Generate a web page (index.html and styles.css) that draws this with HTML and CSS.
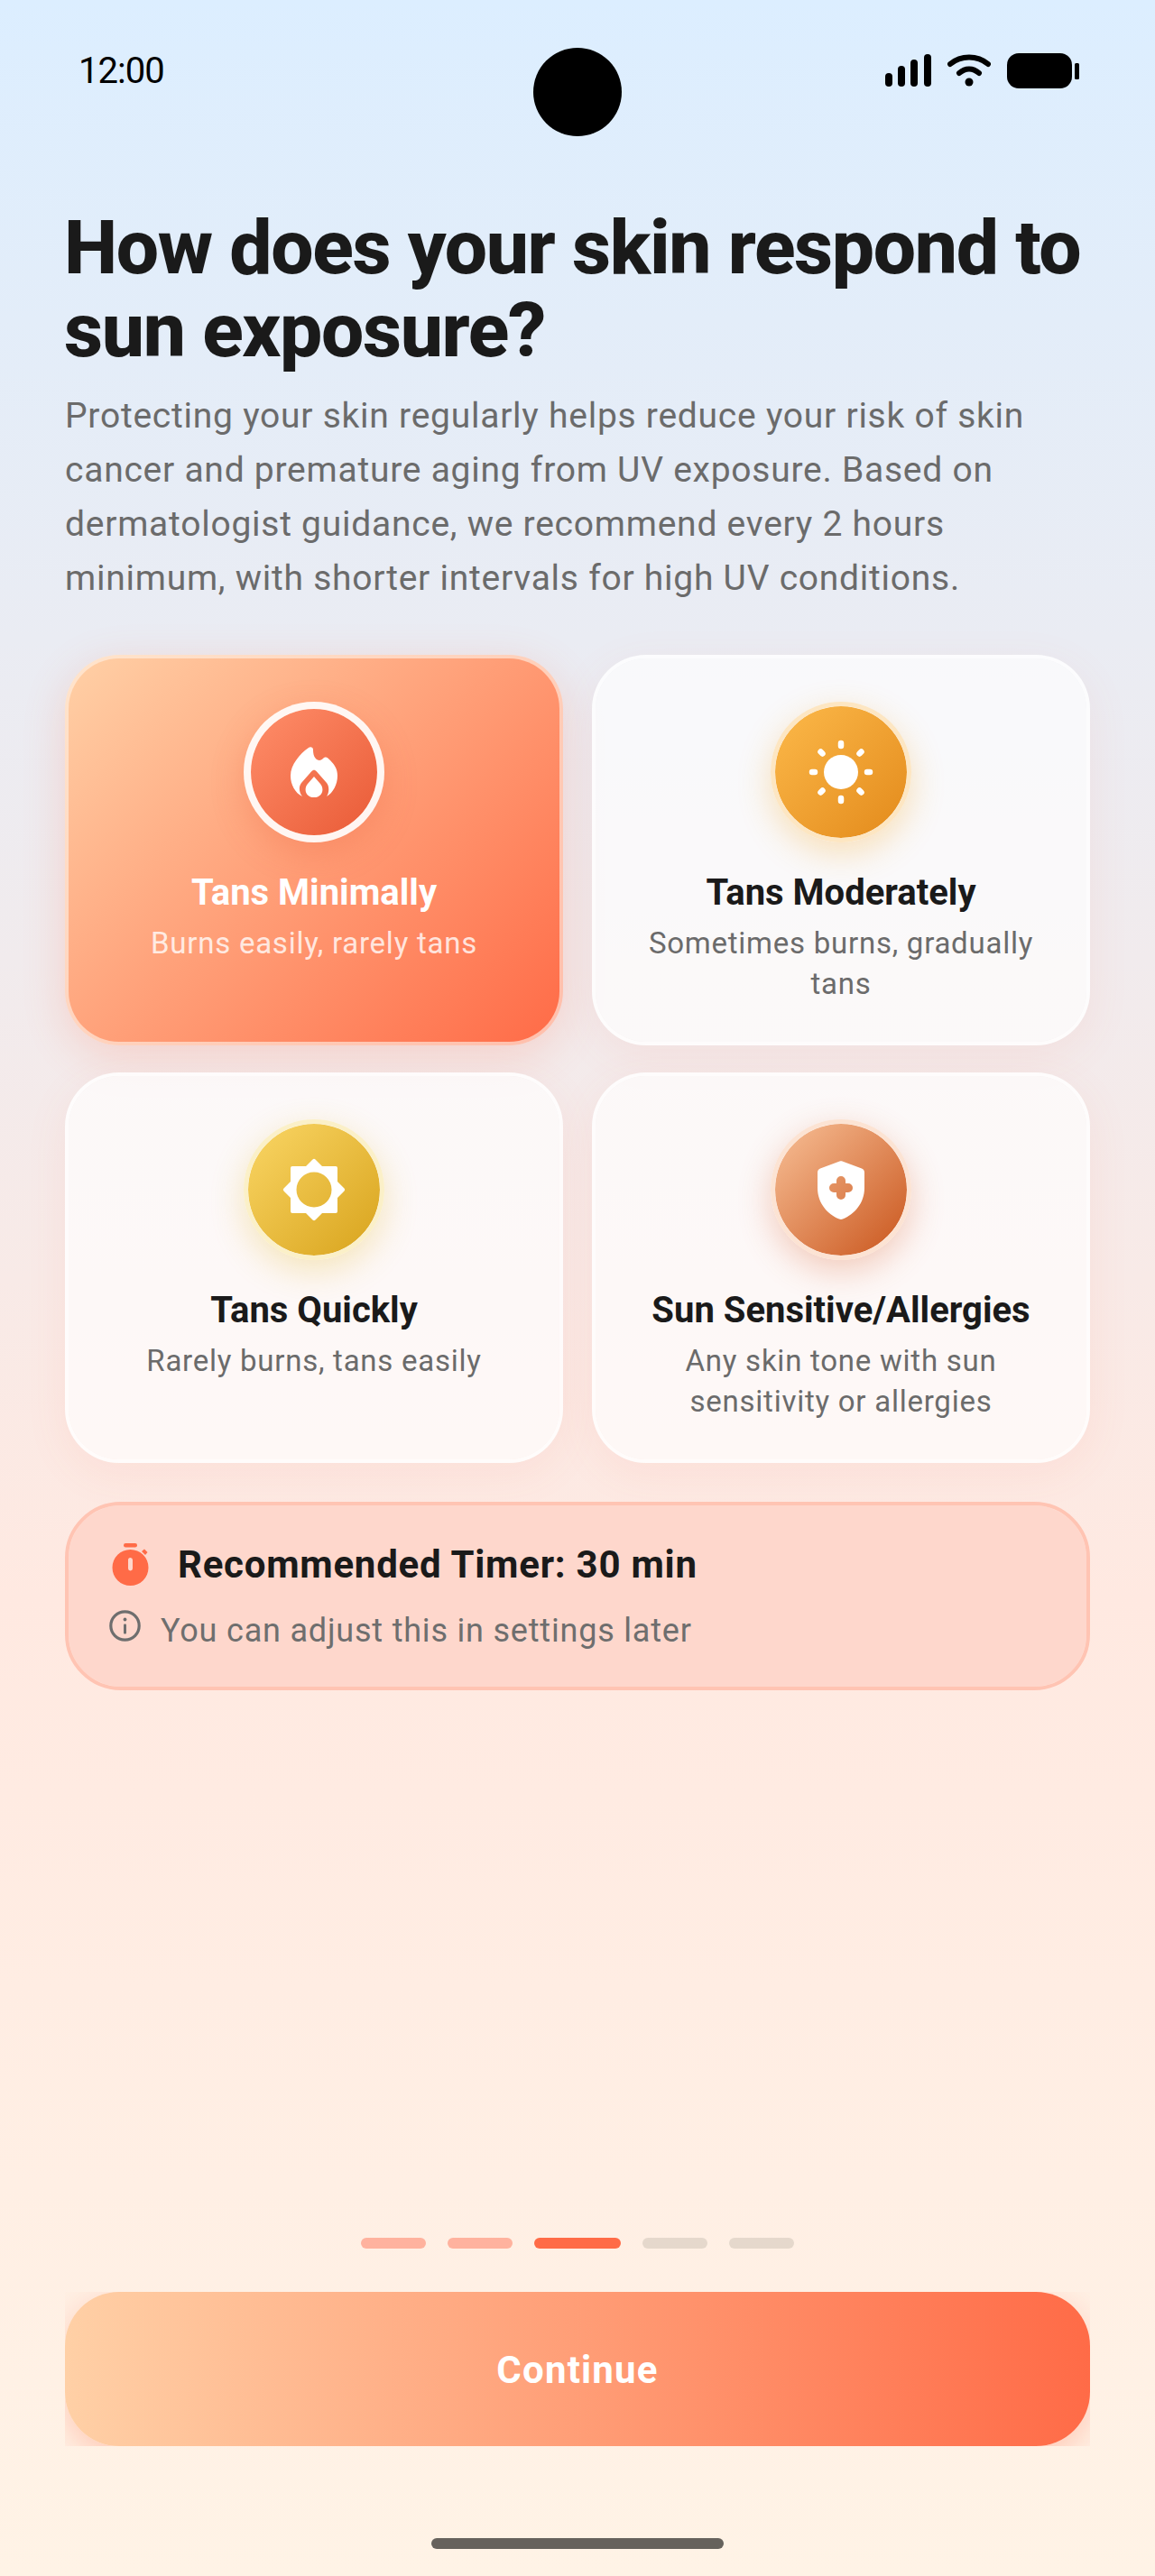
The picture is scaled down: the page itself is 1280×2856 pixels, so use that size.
FILE: index.html

```html
<!DOCTYPE html>
<html lang="en">
<head>
<meta charset="utf-8"/>
<meta content="width=device-width, initial-scale=1.0" name="viewport"/>
<title>Skin type</title>
<link rel="stylesheet" href="styles.css">
</head>
<body>
<div class="screen">
  <div class="status">
    <span class="time">12:00</span>
    <div class="camera"></div>
    <div class="status-icons">
      <svg width="51" height="36" viewBox="0 0 51 36"><rect x="0" y="21" width="8" height="15" rx="4"/><rect x="14" y="13" width="8" height="23" rx="4"/><rect x="28" y="6" width="8" height="30" rx="4"/><rect x="43" y="0" width="8" height="36" rx="4"/></svg>
      <svg width="48" height="36" viewBox="0 0 48 36"><path d="M3 11C15 1 33 1 45 11" fill="none" stroke="#000" stroke-width="6" stroke-linecap="round"/><path d="M13 21C20 15 28 15 35 21" fill="none" stroke="#000" stroke-width="6" stroke-linecap="round"/><circle cx="24" cy="31" r="4.5"/></svg>
      <svg class="battery" width="80" height="39" viewBox="0 0 80 39"><rect x="0" y="0" width="72" height="39" rx="13"/><rect x="75" y="11" width="5" height="18" rx="1.5"/></svg>
    </div>
  </div>

  <h1>How does your skin respond to sun exposure?</h1>
  <p class="intro">Protecting your skin regularly helps reduce your risk of skin cancer and premature aging from UV exposure. Based on dermatologist guidance, we recommend every 2 hours minimum, with shorter intervals for high UV conditions.</p>

  <div class="options">
    <div class="option selected">
      <div class="badge badge-fire">
        <svg width="52" height="56" viewBox="0 0 52 56"><path fill="#fff" fill-rule="evenodd" d="M20 1C22-.5 25 .5 25 3C25 8 26 14 32 15C35 15 36 12 38.5 11.5C40 11 42 13 44 15C49 20 52 25 52 32C52 42 47 51 40 55C43 50 43 44 40 40L29 27.5C27 25 25 25 23 27.5L12 40C9 44 9 50 13 55C5 51 0 42 0 32C0 20 10 8 20 1ZM26 33L33 41C38 47 35 56 26 56C17 56 14 47 19 41Z"/></svg>
      </div>
      <h3>Tans Minimally</h3>
      <p>Burns easily, rarely tans</p>
    </div>
    <div class="option">
      <div class="badge badge-sun">
        <svg width="80" height="80" viewBox="0 0 80 80"><circle cx="40" cy="40" r="19" fill="#fff"/><g stroke="#fff" stroke-width="6.5" stroke-linecap="round"><path d="M40 8V11M40 69V72M8 40H11M69 40H72M17.5 17.5L19.5 19.5M60.5 60.5L62.5 62.5M17.5 62.5L19.5 60.5M60.5 19.5L62.5 17.5"/></g></svg>
      </div>
      <h3>Tans Moderately</h3>
      <p>Sometimes burns, gradually tans</p>
    </div>
    <div class="option">
      <div class="badge badge-bright">
        <svg width="70" height="70" viewBox="0 0 70 70"><path fill="#fff" fill-rule="evenodd" d="M33.5 1.5Q35 0 36.5 1.5L44 9H59Q61 9 61 11V26L68.5 33.5Q70 35 68.5 36.5L61 44V59Q61 61 59 61H44L36.5 68.5Q35 70 33.5 68.5L26 61H11Q9 61 9 59V44L1.5 36.5Q0 35 1.5 33.5L9 26V11Q9 9 11 9H26ZM35 15.5A19.5 19.5 0 1 0 35 54.5A19.5 19.5 0 1 0 35 15.5Z"/></svg>
      </div>
      <h3>Tans Quickly</h3>
      <p>Rarely burns, tans easily</p>
    </div>
    <div class="option">
      <div class="badge badge-shield">
        <svg width="52" height="65" viewBox="0 0 52 65"><path fill="#fff" fill-rule="evenodd" d="M24.5 .5C25.5 0 26.5 0 27.5 .5L49 8.5C51 9.3 52 11 52 13V30C52 47 41 59 28 64.5C26.7 65 25.3 65 24 64.5C11 59 0 47 0 30V13C0 11 1 9.3 3 8.5ZM21 25V22A5 5 0 0 1 31 22V25H34A5 5 0 0 1 34 35H31V38A5 5 0 0 1 21 38V35H18A5 5 0 0 1 18 25Z"/></svg>
      </div>
      <h3>Sun Sensitive/Allergies</h3>
      <p>Any skin tone with sun sensitivity or allergies</p>
    </div>
  </div>

  <div class="timer">
    <div class="timer-main">
      <svg width="41" height="47" viewBox="0 0 41 47"><rect x="13" y="0" width="15" height="4.5" rx="2.2" fill="#ff6b47"/><path fill="#ff6b47" d="M33 9L36 6.5L39.5 10L37 13Z"/><path fill="#ff6b47" fill-rule="evenodd" d="M20.5 7A20 20 0 1 0 20.5 47A20 20 0 1 0 20.5 7ZM18 18.5A2.5 2.5 0 0 1 23 18.5V28A2.5 2.5 0 0 1 18 28Z"/></svg>
      <span>Recommended Timer: 30 min</span>
    </div>
    <div class="timer-note">
      <svg width="35" height="35" viewBox="0 0 35 35"><circle cx="17.5" cy="17.5" r="15.7" fill="none" stroke="#6e6e6e" stroke-width="3.2"/><rect x="16" y="15.5" width="3" height="11" rx="1" fill="#6e6e6e"/><circle cx="17.5" cy="10.5" r="1.9" fill="#6e6e6e"/></svg>
      <span>You can adjust this in settings later</span>
    </div>
  </div>

  <div class="dots">
    <span class="dot done"></span>
    <span class="dot done"></span>
    <span class="dot active"></span>
    <span class="dot"></span>
    <span class="dot"></span>
  </div>

  <div class="continue-wrap">
    <button class="continue">Continue</button>
  </div>

  <div class="home-bar"></div>
</div>
</body>
</html>
```

FILE: styles.css

```css
* {
  box-sizing: border-box;
}
html, body {
  margin: 0;
  padding: 0;
}
body {
  font-family: Roboto, "Liberation Sans", sans-serif;
  color: #1a1a1a;
}
.screen {
  position: relative;
  width: 1280px;
  height: 2856px;
  padding: 0 72px 30px;
  display: flex;
  flex-direction: column;
  background: linear-gradient(180deg, #dceeff 0%, #ffe9e1 62%, #fff3e6 100%);
}

/* status bar */
.status {
  display: flex;
  justify-content: space-between;
  align-items: center;
  height: 52px;
  margin: 52px 12px 0 15px;
}
.time {
  font-size: 40px;
  letter-spacing: -1px;
  color: #000;
}
.camera {
  position: absolute;
  left: 591px;
  top: 53px;
  width: 98px;
  height: 98px;
  border-radius: 50%;
  background: #000;
}
.status-icons {
  display: flex;
  align-items: center;
  gap: 18px;
}
.status-icons svg {
  display: block;
}

/* heading */
h1 {
  margin: 125px 0 0 -1px;
  font-size: 84px;
  line-height: 92px;
  font-weight: 800;
  letter-spacing: -1.35px;
  color: #1a1a1a;
}
.intro {
  margin: 18px 0 0;
  font-size: 39px;
  line-height: 60px;
  letter-spacing: 0.75px;
  color: #6b6b6b;
}

/* skin type cards */
.options {
  display: grid;
  grid-template-columns: 552px 552px;
  column-gap: 32px;
  row-gap: 30px;
  margin-top: 55px;
}
.option {
  padding: 48px 30px 42px;
  border: 4px solid rgba(255, 255, 255, 0.85);
  border-radius: 60px;
  background: rgba(255, 255, 255, 0.68);
  background-clip: padding-box;
  box-shadow: 0 12px 48px rgba(255, 107, 71, 0.08);
  text-align: center;
}
.option h3 {
  margin: 32px 0 9px;
  font-size: 40px;
  line-height: 48px;
  font-weight: 700;
  color: #1a1a1a;
}
.option p {
  margin: 0;
  font-size: 33px;
  line-height: 45px;
  letter-spacing: 0.75px;
  color: #6b6b6b;
}
.option.selected {
  border-color: transparent;
  background: linear-gradient(135deg, #ffd0a6 0%, #ff6b47 100%) padding-box,
    linear-gradient(135deg, #ffe4cc 0%, #ffbfac 100%) border-box;
  box-shadow: 0 12px 48px rgba(255, 107, 71, 0.2);
}
.option.selected h3 {
  color: #fff;
}
.option.selected p {
  color: rgba(255, 255, 255, 0.8);
}
.badge {
  display: flex;
  align-items: center;
  justify-content: center;
  width: 156px;
  height: 156px;
  margin: 0 auto;
  border-radius: 50%;
  border: 5px solid #fde6c2;
  background-clip: padding-box;
}
.badge-fire {
  border: 8px solid rgba(255, 255, 255, 0.9);
  background-image: linear-gradient(135deg, #ff8e6a, #e95a36);
  box-shadow: 0 12px 36px rgba(233, 90, 54, 0.25);
}
.badge-sun {
  background-image: linear-gradient(135deg, #fcb94a, #e38a1b);
  box-shadow: 0 12px 36px rgba(245, 166, 35, 0.3);
}
.badge-bright {
  border-color: #fbf0c8;
  background-image: linear-gradient(135deg, #fad665, #d8a31c);
  box-shadow: 0 12px 36px rgba(230, 185, 50, 0.3);
}
.badge-shield {
  border-color: #fce3d3;
  background-image: linear-gradient(135deg, #f8c097, #c9551c);
  box-shadow: 0 12px 36px rgba(220, 100, 50, 0.3);
}

/* recommendation box */
.timer {
  margin-top: 43px;
  height: 209px;
  padding: 41px 48px 0;
  border: 4px solid #ffc4b3;
  border-radius: 62px;
  background: #fed7cc;
  background-clip: padding-box;
}
.timer-main {
  display: flex;
  align-items: center;
  gap: 32px;
  font-size: 42px;
  font-weight: 700;
  letter-spacing: 0.75px;
  color: #1a1a1a;
}
.timer-note {
  display: flex;
  align-items: flex-start;
  gap: 22px;
  margin: 26px 0 0 -3px;
  font-size: 36px;
  letter-spacing: 0.8px;
  color: #6e6e6e;
}
.timer-note span {
  margin-top: 2px;
}

/* footer */
.dots {
  display: flex;
  justify-content: center;
  gap: 24px;
  margin-top: auto;
}
.dot {
  width: 72px;
  height: 12px;
  border-radius: 6px;
  background: #e5d8cc;
}
.dot.done {
  background: #ffb29e;
}
.dot.active {
  width: 96px;
  background: #ff6b47;
}
.continue-wrap {
  margin-top: 48px;
  height: 171px;
  overflow: hidden;
}
.continue {
  display: block;
  width: 100%;
  height: 100%;
  padding-top: 3px;
  border: none;
  border-radius: 60px;
  background: linear-gradient(90deg, #ffd0a6 0%, #ff6b47 100%);
  box-shadow: 0 12px 36px rgba(255, 107, 71, 0.3);
  font-family: inherit;
  font-size: 42px;
  font-weight: 700;
  letter-spacing: 1.2px;
  color: #fff;
}
.home-bar {
  width: 324px;
  height: 12px;
  margin: 102px auto 0;
  border-radius: 6px;
  background: #66625c;
}
```
